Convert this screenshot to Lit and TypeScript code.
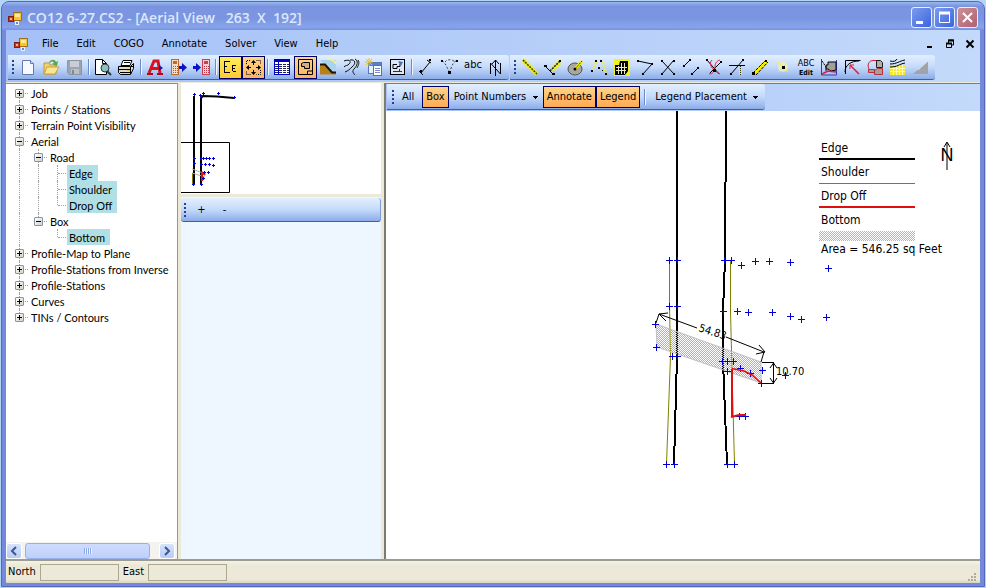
import { LitElement, html, svg, css, nothing } from "lit";
import { customElement, state } from "lit/decorators.js";
import { classMap } from "lit/directives/class-map.js";

const appLogo = () => html`<svg class="logo" viewBox="0 0 14 14" width="14" height="14" aria-hidden="true">
  <rect x="5.5" y="1.5" width="8" height="8" fill="#f6c62c" stroke="#a0701c" />
  <path d="M7 3h5v3h-5z" fill="#fdeb9a" />
  <rect x="0.5" y="5.500" width="5" height="5" fill="#c8381c" stroke="#7c2010" />
  <rect x="2" y="7" width="2" height="2" fill="#f8b090" />
  <rect x="7.500" y="10.500" width="3" height="3" fill="#5a8ae8" stroke="#e8f0ff" />
</svg>`;

const blueArrow = (x: number) =>
  svg`<path d="M${x} 10h3v-3l5 4.500l-5 4.500v-3h-3z" fill="#1010c8" />`;

const icons: Record<string, unknown> = {
  new: svg`<path d="M5.500 4.500h8l3 3v11h-11z" fill="#f6f9ff" stroke="#6478b4" /><path d="M13.500 4.500v3h3" fill="#c8d8f4" stroke="#6478b4" />`,
  open: svg`<path d="M4 7h5l1 2h6v9h-12z" fill="#f0d070" stroke="#c09838" /><path d="M4 18l3-7h12l-4 7z" fill="#fbe690" stroke="#c8a040" /><path d="M9 7c1-4 6-4 7-1l2-1l-1 5l-5-2l2-1c-1-2-3-2-4 0z" fill="#58a848" />`,
  save: svg`<path d="M4.500 4.500h14v14h-12l-2-2z" fill="#9ca4b0" stroke="#8c94a0" /><rect x="7" y="5" width="9" height="6" fill="#c8ced8" /><rect x="8" y="13" width="8" height="5" fill="#b8c0cc" /><rect x="9" y="14" width="2" height="4" fill="#808894" />`,
  preview: svg`<path d="M3.500 3.500h7l4 4v11h-11z" fill="#fff" stroke="#000" /><path d="M10.500 3.500v4h4" fill="none" stroke="#000" /><circle cx="13" cy="12" r="4" fill="#8cc0c0" stroke="#303838" /><path d="M15 15l4 4" stroke="#303838" stroke-width="2" />`,
  print: svg`<path d="M8 4.500h9l-2 5h-9z" fill="#fff" stroke="#000" /><path d="M9 6.500h6" stroke="#000" /><path d="M3.500 10.500h12l3-3v5l-3 6h-10l-2-2z" fill="#dcdccc" stroke="#000" /><path d="M4 13.500h12M15.500 11v7M16 10.500h2M5 16.500h10" stroke="#000" /><rect x="12" y="14" width="3" height="1" fill="#e8d820" />`,
  style: svg`<path d="M5 17l5-12h4l2 12M8 12.500h7" fill="none" stroke="#d81020" stroke-width="3" /><path d="M3 18h6M13 18h6" stroke="#b00818" stroke-width="2" /><path d="M15 9l4 3l-4 3z" fill="#1818b0" />`,
  calcOut: svg`<rect x="4.500" y="3.500" width="7" height="15" fill="#f4dcc8" stroke="#c86820" /><rect x="6" y="5" width="4" height="3" fill="#c86820" /><path d="M6.500 10v7M8.500 10v7M10.500 10v7" stroke="#b05818" stroke-dasharray="1 1" />${blueArrow(12)}`,
  calcIn: svg`<rect x="12.500" y="3.500" width="7" height="15" fill="#f8d0d4" stroke="#c84050" /><rect x="14" y="5" width="4" height="3" fill="#c84050" /><path d="M14.500 10v7M16.500 10v7M18.500 10v7" stroke="#b83848" stroke-dasharray="1 1" />${blueArrow(3)}`,
  tree: svg`<path d="M5.500 5v12M6 5.500h5M6 10.500h2M6 16.500h5M13.500 9v6M14 9.500h3M14 12.500h2M14 15.500h3" fill="none" stroke="#000" />`,
  extents: svg`<path d="M4.500 8v-3.500h4M14.500 4.500h4v4M18.500 14v4.500h-4M8.500 18.500h-4v-4" fill="none" stroke="#000" stroke-dasharray="1 1" /><path d="M11.500 4l2.500 3h-5zM11.500 19l2.500-3h-5zM4 11.500l3-2.500v5zM19 11.500l-3-2.500v5z" fill="#000" /><path d="M11.500 6v3M11.500 14v3M6 11.500h3M14 11.500h3" stroke="#000" />`,
  table: svg`<rect x="3" y="3" width="16" height="16" fill="#fff" /><path d="M3 4.500h16" stroke="#0000c0" stroke-width="3" /><path d="M3.500 3v16M7.500 3v16M18.500 3v16" stroke="#0000c0" /><path d="M4 8.500h14M4 10.500h14M4 12.500h14M4 14.500h14M4 16.500h14" stroke="#202060" stroke-dasharray="3 1" /><path d="M3 18.500h16" stroke="#0000c0" />`,
  sheet: svg`<path d="M4.500 3.500h14v15h-14z" fill="none" stroke="#000" /><path d="M13.500 18v-3h5" fill="none" stroke="#000" /><path d="M9.500 6.500h6v6h-5v-2h-3v-3z" fill="#d8b080" stroke="#000" />`,
  hill: svg`<path d="M3 4h16v10h-7z" fill="#a8d4f0" /><path d="M10 3c4 0 8 2 9 5" fill="none" stroke="#f4f090" stroke-width="2" /><path d="M3 8.500h5l6 7l5 1v2h-16z" fill="#b88018" /><path d="M3 8.500h5l7 8h4" fill="none" stroke="#201400" stroke-width="2" />`,
  contour: svg`<path d="M4 5c5-2 8 0 5 3c-1 2-4 1-5 3M10 4c6-1 6 4 2 7c-2 2-4 4-7 5M15 3c4 2 2 7-1 10c-2 2-1 4 1 6M18 4c2 3 0 6-1 8" fill="none" stroke="#101010" />`,
  form: svg`<rect x="5.500" y="6.500" width="13" height="11" fill="#e8f0fc" stroke="#5878b8" /><rect x="6" y="7" width="12" height="3" fill="#5880d0" /><rect x="10.500" y="9.500" width="8" height="10" fill="#fff" stroke="#707070" /><path d="M12 12.500h5M12 14.500h5M12 16.500h5" stroke="#7890c0" /><path d="M6 2v8M2 6h8M3 3l6 6M9 3l-6 6" stroke="#e8c030" />`,
  redo: svg`<rect x="4.500" y="3.500" width="14" height="15" fill="#dce8f8" stroke="#000" /><path d="M11 8.500h-4v4h4v-2h3v-3" fill="none" stroke="#000" /><path d="M12 5l5 1l-2 4z" fill="#4878b0" /><path d="M7 15.500h9M13.500 13v3" stroke="#303030" />`,
  segment: svg`<path d="M6 17l9-11M4 15l4 4M12 4l4 3" stroke="#000" fill="none" /><path d="M5 14h2v2h-2zM14 3h2v2h-2z" />`,
  arc: svg`<path d="M4 5c3 1 4 5 7 10M18 5c-3 1-4 5-6 10M7 6c2-3 7-3 10 0" fill="none" stroke="#404040" stroke-dasharray="2 2" /><path d="M3 4h2v2h-2zM18 4h2v2h-2zM10 15h3v3h-3z" />`,
  abc: svg`<text x="12" y="12" text-anchor="middle" class="glyph wide">abc</text>`,
  north: svg`<path d="M6.500 18v-11l10 11v-11" fill="none" stroke="#000" /><path d="M11.500 20v-16M8 8l3.500-4l3.500 4" fill="none" stroke="#000" />`,
  yellowLine: svg`<path d="M4 4l14 14" stroke="#f4f000" stroke-width="4" /><path d="M4 4l14 14" stroke="#404000" stroke-width="1.500" stroke-dasharray="2 1" />`,
  perp: svg`<path d="M10 14l8-8" stroke="#f4f000" stroke-width="4" /><path d="M8 15l10-10" stroke="#202020" stroke-width="1.500" stroke-dasharray="2 1" /><path d="M3 10l8 8" stroke="#000" /><path d="M2 9h3v2h-3zM10 17h3v2h-3zM17 4h2v2h-2z" />`,
  circle: svg`<ellipse cx="10" cy="13" rx="7" ry="6" fill="#a8a89c" stroke="#505050" /><path d="M10 13l7-8" stroke="#f4f000" stroke-width="3" /><path d="M10 13l7-8" stroke="#404000" stroke-dasharray="2 1" /><circle cx="10" cy="13" r="1.500" />`,
  spread: svg`<path d="M8 5l-4 11M14 5l4 12" stroke="#f0ec40" stroke-width="2" stroke-dasharray="3 1" /><path d="M7 4h2v2h-2zM12 4h2v2h-2zM3 14h2v2h-2zM10 11h2v2h-2zM17 17h2v2h-2zM14 14h1v1h-1z" />`,
  grid: svg`<rect x="3" y="3" width="16" height="17" fill="#f4f020" /><path d="M9 5h8v10l-3 4h-10v-10h4z" fill="#000" /><path d="M5 11.500h11M5 14.500h10M7.500 10v8M10.500 7v11M13.500 7v11" stroke="#e8e8c0" />`,
  angle: svg`<path d="M4 5l14 3l-9 10" fill="none" stroke="#000" /><path d="M3 4h2v2h-2zM17 7h2v2h-2zM8 17h2v2h-2z" />`,
  cross: svg`<path d="M5 5l12 13M17 4l-12 14" stroke="#000" /><path d="M4 4h2v2h-2zM16 4h2v2h-2zM4 17h2v2h-2zM16 17h2v2h-2z" />`,
  parallel: svg`<path d="M4 10l6-6M12 18l6-6" stroke="#000" /><path d="M3 9h2v2h-2zM9 3h2v2h-2zM11 17h2v2h-2zM17 11h2v2h-2z" />`,
  curveCross: svg`<path d="M4 4l12 14M18 6l-11 11" fill="none" stroke="#000" /><path d="M9 4c-4 4 0 10 8 14M17 4c-4 1-5 4-5 7c0 4-2 7-6 7" fill="none" stroke="#e02040" /><path d="M3 3h2v2h-2zM17 5h2v2h-2zM10 13h3v3h-3z" />`,
  offset: svg`<path d="M3 9.500h16M5 18l12-14" stroke="#000" /><path d="M14.500 10v9" stroke="#f4f000" stroke-width="3" /><path d="M14.500 10v9" stroke="#303000" stroke-dasharray="1 1" /><path d="M4 17h2v2h-2zM16 3h2v2h-2z" />`,
  band: svg`<path d="M6 17l12-12" stroke="#f4f000" stroke-width="4" /><path d="M4 17l13-13M7 19l12-13" stroke="#000" stroke-dasharray="3 1" /><path d="M3 16h3v3h-3zM16 4h2v2h-2z" />`,
  point: svg`<circle cx="11" cy="11" r="5" fill="#f8f4a0" opacity="0.700" /><path d="M6 6l10 10M16 6l-10 10" stroke="#f4ee50" /><rect x="10" y="10" width="3" height="3" />`,
  abcEdit: svg`<text x="11" y="10" text-anchor="middle" class="glyph">ABC</text><text x="11" y="19" text-anchor="middle" class="glyph tiny">Edit</text>`,
  area: svg`<path d="M3.500 3v16h15v-15" fill="none" stroke="#3838b0" /><path d="M10 6h8v8l-5 1l-3-2h-2v-4h2z" fill="#a0a098" stroke="#000" /><path d="M4 5l4 6v5" fill="none" stroke="#000" stroke-dasharray="2 1" /><path d="M4 18l6-3l8 1" fill="none" stroke="#d82038" stroke-width="1.500" />`,
  tangent: svg`<path d="M4.500 18v-13.500h15M4 16c0-7 6-11 14-11" fill="none" stroke="#000" /><path d="M9 9l9 9" stroke="#d82038" stroke-width="1.500" /><path d="M9 9h4M9 9v4" stroke="#d82038" />`,
  boundary: svg`<path d="M13 4.500h-4c-7 0-6 11 0 11" fill="none" stroke="#d82038" /><path d="M12.500 4.500h4l2 2v5h-6z" fill="#b0b0a8" stroke="#202020" /><path d="M4.500 13.500h6v3h-6zM10.500 14.500l3-2h5v6h-8z" fill="#a8a098" stroke="#b03040" />`,
  slope: svg`<rect x="3" y="9" width="15" height="10" fill="#f4e830" /><path d="M6.500 10v9M9.500 9v10M12.500 9v10M15.500 9v10M3 12.500h15M3 15.500h15" stroke="#fff8b0" /><path d="M3 5c4 1 6 0 7-2M3 8c7 0 9-3 15-4M3 11c8 0 9-3 15-4" fill="none" stroke="#000" />`,
  wedge: svg`<path d="M3 18l15-13v13z" fill="#a0a4a8" /><path d="M8 14l10-9" stroke="#e0e4e8" />`,
};

type Tool = { icon: string; label: string; on?: boolean } | null;

const mainTools: Tool[] = [
  { icon: "new", label: "New" },
  { icon: "open", label: "Open" },
  { icon: "save", label: "Save" },
  null,
  { icon: "preview", label: "Print preview" },
  { icon: "print", label: "Print" },
  null,
  { icon: "style", label: "Annotation style" },
  { icon: "calcOut", label: "Send to data collector" },
  { icon: "calcIn", label: "Read from data collector" },
  null,
  { icon: "tree", label: "Tree", on: true },
  { icon: "extents", label: "Zoom extents", on: true },
  null,
  { icon: "table", label: "Point table" },
  { icon: "sheet", label: "Aerial view", on: true },
  { icon: "hill", label: "Terrain" },
  { icon: "contour", label: "Contours" },
  { icon: "form", label: "New view" },
  { icon: "redo", label: "Refresh drawing" },
  null,
  { icon: "segment", label: "Dimension" },
  { icon: "arc", label: "Arc" },
  { icon: "abc", label: "Text" },
  { icon: "north", label: "North arrow" },
];

const solverTools: Tool[] = [
  { icon: "yellowLine", label: "Inverse" },
  { icon: "perp", label: "Perpendicular" },
  { icon: "circle", label: "Circle" },
  { icon: "spread", label: "Radial points" },
  { icon: "grid", label: "Area grid" },
  { icon: "angle", label: "Angle" },
  { icon: "cross", label: "Intersection" },
  { icon: "parallel", label: "Parallel" },
  { icon: "curveCross", label: "Curve intersection" },
  { icon: "offset", label: "Offset" },
  { icon: "band", label: "Band" },
  { icon: "point", label: "Point" },
  { icon: "abcEdit", label: "Edit text" },
  { icon: "area", label: "Area" },
  { icon: "tangent", label: "Tangent" },
  { icon: "boundary", label: "Boundary" },
  { icon: "slope", label: "Slope grid" },
  { icon: "wedge", label: "Grade" },
];

// Guide letters: "f" full line, "t" full line with branch, "h" upper half with branch,
// "b" lower half with branch, "-" blank.
type Row = { label: string; guides: string; sign?: "+" | "-"; marked?: boolean };

const rows: Row[] = [
  { label: "Job", guides: "b", sign: "+" },
  { label: "Points / Stations", guides: "t", sign: "+" },
  { label: "Terrain Point Visibility", guides: "t", sign: "+" },
  { label: "Aerial", guides: "t", sign: "-" },
  { label: "Road", guides: "ft", sign: "-" },
  { label: "Edge", guides: "fft", marked: true },
  { label: "Shoulder", guides: "fft", marked: true },
  { label: "Drop Off", guides: "ffh", marked: true },
  { label: "Box", guides: "fh", sign: "-" },
  { label: "Bottom", guides: "f-h", marked: true },
  { label: "Profile-Map to Plane", guides: "t", sign: "+" },
  { label: "Profile-Stations from Inverse", guides: "t", sign: "+" },
  { label: "Profile-Stations", guides: "t", sign: "+" },
  { label: "Curves", guides: "t", sign: "+" },
  { label: "TINs / Contours", guides: "h", sign: "+" },
];

const surveyPoints: [number, number][] = [
  [283, 149], [291, 149], [283, 195], [291, 195], [286, 245], [291, 245],
  [280, 353], [288, 353], [269, 213], [270, 236],
  [338, 149], [345, 149], [355, 154], [369, 150], [383, 150], [404, 151], [442, 157],
  [337, 200], [351, 200], [362, 201], [386, 201], [404, 205], [415, 208], [440, 206],
  [336, 250], [341, 250], [347, 250], [341, 260], [354, 257], [364, 262],
  [376, 259], [399, 264], [375, 272], [353, 305], [359, 305], [341, 353], [348, 353],
];

const overviewPoints: [number, number][] = [
  [13, 11], [19, 12], [22, 10], [37, 10], [53, 14], [13, 75], [20, 75],
  [22, 75], [25, 75], [28, 75], [32, 75], [20, 81], [24, 81], [28, 81], [32, 82],
  [13, 80], [23, 89], [27, 89], [22, 95], [12, 101], [20, 101],
];

const plus = ([x, y]: [number, number], r: number) => `M${x - r} ${y + 0.5}h${2 * r + 1}M${x + 0.5} ${y - r}v${2 * r + 1}`;

const uiFont = css`"DejaVu Sans Condensed", "DejaVu Sans", sans-serif`;

@customElement("tool-strip")
class ToolStrip extends LitElement {
  static properties = { tools: { attribute: false } };
  declare tools: Tool[];

  static styles = css`
    :host { display: flex; align-items: center; height: 24px; padding: 0 2px 0 4px;
      background: linear-gradient(#e3effe, #c4dafb 50%, #8cade9);
      border-bottom: 1px solid #3b61a4; border-radius: 0 3px 3px 0; }
    .grip { width: 3px; height: 14px; margin-right: 2px;
      background: repeating-linear-gradient(#27418b 0 2px, transparent 2px 4px) 0 0 / 2px 14px no-repeat; }
    .sep { width: 1px; height: 16px; margin: 0 2px; background: #6a8ccb; border-right: 1px solid #f1f6ff; }
    button { display: flex; width: 23px; height: 23px; padding: 0; border: 0; background: none; }
    button.on { background: linear-gradient(#fed78c, #ffb060); box-shadow: inset 0 0 0 1px #00006c; }
    button.tree { background: linear-gradient(#fff060, #ffc830); }
    .glyph { font: 9px ${uiFont}; }
    .wide { font-size: 11px; }
    .tiny { font-size: 7px; font-weight: 700; }
  `;

  render() {
    return html`<span class="grip"></span>${this.tools.map((t) =>
      t
        ? html`<button class=${classMap({ on: !!t.on, tree: t.icon === "tree" })} aria-label=${t.label} title=${t.label}>
            <svg viewBox="0 0 23 23" width="23" height="23">${icons[t.icon]}</svg>
          </button>`
        : html`<span class="sep"></span>`
    )}`;
  }
}

@customElement("nav-tree")
class NavTree extends LitElement {
  static styles = css`
    :host { display: flex; flex-direction: column; background: #fff; min-height: 0;
      font: 11px/16px Lato, "Liberation Sans", sans-serif; color: #000; }
    ul { flex: 1; margin: 0; padding: 1px 0 0 4px; list-style: none; overflow: hidden; }
    li { display: flex; height: 16px; white-space: nowrap; }
    .guide { position: relative; width: 19px; height: 16px; flex: none; }
    .guide::before { content: ""; position: absolute; left: 9px; top: 0; bottom: 0; border-left: 1px dotted #a0a0a0; }
    .guide.b::before { top: 8px; }
    .guide.h::before { bottom: 8px; }
    .guide.none::before { display: none; }
    .t::after, .h::after, .b::after { content: ""; position: absolute; left: 10px; right: 1px; top: 8px; border-top: 1px dotted #a0a0a0; }
    .toggle { position: absolute; z-index: 1; left: 5px; top: 4px; width: 9px; height: 9px; padding: 0;
      border: 1px solid #8496ac; border-radius: 1px; background: linear-gradient(135deg, #fff, #d4d0c4); }
    .toggle::before { content: ""; position: absolute; left: 1px; top: 3px; width: 5px; height: 1px; background: #000; }
    .closed::after { content: ""; position: absolute; left: 3px; top: 1px; width: 1px; height: 5px; background: #000; }
    .name { height: 16px; line-height: 18px; padding: 0 5px 0 2px; }
    .marked { background: #b0e0e6; }
    .scroll { display: flex; align-items: center; gap: 3px; height: 17px; padding: 0 2px 0 0; background: #f4f3ee; }
    .end { width: 16px; height: 16px; padding: 0; border: 1px solid #fff; border-radius: 3px; background: linear-gradient(#d6e2fd, #b8ccf8); display: flex; }
    .track { flex: 1; display: flex; }
    .thumb { flex: 1; margin-right: 6px; height: 14px; border: 1px solid #98b0e8; border-radius: 3px; display: flex; align-items: center; justify-content: center;
      background: linear-gradient(#cfdcfe, #bdd0fb); }
    .ridges { width: 8px; height: 6px; background: repeating-linear-gradient(90deg, #8ca8e8 0 1px, #eaf1ff 1px 2px); }
  `;

  private cell(kind: string) {
    return kind === "-" ? "none" : kind;
  }

  render() {
    return html`
      <ul>
        ${rows.map(
          (r) => html`<li>
            ${[...r.guides].map(
              (g, i) => html`<span class="guide ${this.cell(g)}">${r.sign && i === r.guides.length - 1
                ? html`<button class=${classMap({ toggle: true, closed: r.sign === "+" })} aria-label="Toggle ${r.label}"></button>`
                : nothing}</span>`
            )}
            <span class=${classMap({ name: true, marked: !!r.marked })}>${r.label}</span>
          </li>`
        )}
      </ul>
      <div class="scroll">
        <button class="end" aria-label="Scroll left"><svg viewBox="0 0 14 14" width="14" height="14"><path d="M9 3l-4 4l4 4" fill="none" stroke="#3c5890" stroke-width="2" /></svg></button>
        <div class="track"><div class="thumb"><span class="ridges"></span></div></div>
        <button class="end" aria-label="Scroll right"><svg viewBox="0 0 14 14" width="14" height="14"><path d="M5 3l4 4l-4 4" fill="none" stroke="#3c5890" stroke-width="2" /></svg></button>
      </div>
    `;
  }
}

@customElement("aerial-view")
class AerialView extends LitElement {
  @state() private shown: Record<string, boolean> = { Box: true, Annotate: true, Legend: true };

  static styles = css`
    :host { display: flex; flex-direction: column; background: #fff; min-width: 0; font: 11px/16px ${uiFont}; }
    .bar { display: flex; background: linear-gradient(90deg, #a6c1f5, #c4dafb); height: 27px; padding-left: 1px; }
    .strip { display: flex; align-items: center; height: 26px; padding: 1px 2px 0 5px; box-sizing: border-box;
      background: linear-gradient(#e3effe, #c4dafb 50%, #8cade9); border-bottom: 1px solid #3b61a4; border-radius: 0 3px 3px 0; }
    .grip { width: 3px; height: 14px; margin-right: 3px; background: repeating-linear-gradient(#27418b 0 2px, transparent 2px 4px) 0 0 / 2px 14px no-repeat; }
    button { height: 22px; padding: 0 4px; border: 0; background: none; font: inherit; color: #000; }
    .all { padding: 0 8px 0 4px; }
    button.on { background: linear-gradient(#fed78c, #ffa850); box-shadow: inset 0 0 0 1px #00006c; }
    select { height: 22px; padding: 0 16px 0 5px; border: 0; font: inherit; color: #000; appearance: none;
      background: linear-gradient(#000, #000) no-repeat right 5px top 10px / 5px 1px, linear-gradient(#000, #000) no-repeat right 6px top 11px / 3px 1px, linear-gradient(#000, #000) no-repeat right 7px top 12px / 1px 1px; }
    .sep { width: 1px; height: 16px; margin: 0 4px; background: #6a8ccb; border-right: 1px solid #f1f6ff; }
    .canvas { position: relative; flex: 1; min-height: 0; }
    .plan { position: absolute; inset: 0; width: 100%; height: 100%; }
    .dim { font: 11px ${uiFont}; }
    .compass { position: absolute; right: 26px; top: 28px; }
    .letter { font: 18px "Liberation Sans", Arial, sans-serif; }
    .legend { position: absolute; right: 33px; top: 25px; width: 128px; font: 12px/24px ${uiFont}; white-space: nowrap; }
    .key { width: 96px; height: 24px; padding-left: 2px; box-sizing: border-box; }
    .edge { border-bottom: 2px solid #000; }
    .shoulder { border-bottom: 1px solid #808000; }
    .drop { border-bottom: 2px solid #e01010; }
    .hatch { height: 23px; }
    .swatch { width: 96px; height: 10px; background: repeating-conic-gradient(#b4b4b4 0 25%, #fff 0 50%) 0 0 / 2px 2px; }
    .sum { padding-left: 2px; line-height: 16px; }
  `;

  private toggle(name: string) {
    this.shown = { ...this.shown, [name]: !this.shown[name] };
  }

  private check(name: string) {
    return html`<button class=${classMap({ on: this.shown[name] })} aria-pressed=${this.shown[name]} @click=${() => this.toggle(name)}>${name}</button>`;
  }

  render() {
    return html`
      <div class="bar"><div class="strip">
        <span class="grip"></span>
        <button class="all">All</button>
        ${this.check("Box")}
        <select aria-label="Point Numbers"><option>Point Numbers</option></select>
        ${this.check("Annotate")}${this.check("Legend")}
        <span class="sep"></span>
        <select aria-label="Legend Placement"><option>Legend Placement</option></select>
      </div></div>
      <div class="canvas">
        <svg class="plan" role="img" aria-label="Aerial plan">
          <defs>
            <pattern id="hatch" width="2" height="2" patternUnits="userSpaceOnUse">
              <rect width="1" height="1" fill="#b0b0b0" /><rect x="1" y="1" width="1" height="1" fill="#b0b0b0" />
            </pattern>
          </defs>
          <g fill="none">
            <path d="M283.500 149V195L284.500 245L280.500 353M344.500 149V200L346 261L348.500 353" stroke="#808000" />
            <path d="M291 0V245L288 353M340 0L339 149L337 200V250L341 353" stroke="#000" stroke-width="2" shape-rendering="crispEdges" />
          </g>
          ${this.shown.Box ? svg`<path d="M270 213L375 251V272L271 236z" fill="url(#hatch)" stroke="#c0c0c8" />` : nothing}
          <path d="${surveyPoints.map((p) => plus(p, 3)).join("")}" fill="none" stroke="#0000d8" />
          <path d="M346 306V258" stroke="#e01010" stroke-width="2" />
          <path d="M345 306L353 304H360" fill="none" stroke="#e01010" stroke-width="2" />
          <path d="M346 257.500L358 260L366 264L375 272" fill="none" stroke="#e01010" stroke-width="1.500" />
          ${this.shown.Annotate
            ? svg`<g fill="none" stroke="#000">
                <path d="M270 212L273 203L311 217M340 226L378 241L375 251" />
                <path d="M282 202L273 203L280 210M373 234L379 241L370 243" />
                <path d="M376 251.500H388M376 272.500H388M387.500 252V272M384 257L387.500 252L391 257M384 267L387.500 272L391 267" />
              </g>
              <text class="dim" transform="translate(312 220) rotate(18)">54.83</text>
              <text class="dim" x="390" y="264">10.70</text>`
            : nothing}
        </svg>
        ${this.shown.Legend
          ? html`<div class="legend">
              <div class="key edge">Edge</div>
              <div class="key shoulder">Shoulder</div>
              <div class="key drop">Drop Off</div>
              <div class="key hatch">Bottom</div>
              <div class="swatch"></div>
              <div class="sum">Area = 546.25 sq Feet</div>
            </div>`
          : nothing}
        <svg class="compass" width="14" height="32" viewBox="0 0 14 32" role="img" aria-label="North">
          <text class="letter" x="7" y="22" text-anchor="middle">N</text>
          <path d="M7 31V4M4 8L7 3L10 8" fill="none" stroke="#000" />
        </svg>
      </div>
    `;
  }
}

@customElement("app-root")
class AppRoot extends LitElement {
  static styles = css`
    :host { display: block; box-sizing: border-box; height: 100vh; padding: 1px; background: #b4d4f8; font: 11px/16px ${uiFont}; color: #000; }
    .window { display: flex; flex-direction: column; height: 100%; box-sizing: border-box; padding: 0 4px 3px 4px;
      background: #7589dc; border: 1px solid #5468bc; border-radius: 8px 8px 0 0; }
    .title { display: flex; align-items: center; height: 28px; margin: 0 -4px; padding: 3px 6px 0 6px; box-sizing: border-box; border-radius: 7px 7px 0 0; gap: 5px; flex: none;
      background: linear-gradient(#9cb8f0, #7b94e0 15%, #7b96e1 60%, #86a4ec 90%, #7890dc); color: #dce8fc; }
    .title h1 { flex: 1; margin: 0; font: 600 14px/20px "Open Sans", "Noto Sans", sans-serif; white-space: pre; }
    .caps { display: flex; gap: 2px; }
    .cap { width: 21px; height: 21px; padding: 0; border: 1px solid #e8f0ff; border-radius: 3px; background: linear-gradient(135deg, #7c9cf0, #3c64dc); display: flex; }
    .close { background: linear-gradient(135deg, #cc9098, #b06070); }
    .menu { display: flex; align-items: center; height: 25px; box-sizing: border-box; flex: none; padding: 2px 0 0 8px; background: linear-gradient(90deg, #a4c0f6, #c4dafb); }
    .menu a { color: #000; text-decoration: none; margin-left: 18px; }
    .menu .first { margin-left: 14px; }
    .push { flex: 1; }
    .mini { width: 20px; height: 20px; padding: 0; border: 0; background: none; display: flex; align-items: center; justify-content: center; }
    .tools { display: flex; gap: 1px; padding-left: 2px; height: 27px; flex: none; background: linear-gradient(90deg, #a4c0f6, #c4dafb); border-bottom: 1px solid #ece9d8; }
    .work { flex: 1; display: grid; grid-template-columns: 172px 200px minmax(0, 1fr); column-gap: 3px; min-height: 0; background: #ece9d8; }
    nav-tree { border-right: 1px solid #8c98a8; border-top: 1px solid #8c8c84; }
    .side { display: flex; flex-direction: column; min-width: 0; background: #eef6ff; }
    .overview { height: 111px; background: #fff; border-bottom: 3px solid #ece9d8; }
    .overview svg { display: block; width: 100%; height: 100%; }
    .zoom { display: flex; align-items: center; height: 23px; margin-top: 1px; padding-left: 3px; border-bottom: 1px solid #3b61a4; border-right: 1px solid #7a9ad8; border-radius: 3px;
      background: linear-gradient(#e3effe, #c4dafb 50%, #8cade9); }
    .zoom .grip { width: 3px; height: 14px; margin-right: 3px; background: repeating-linear-gradient(#27418b 0 2px, transparent 2px 4px) 0 0 / 2px 14px no-repeat; }
    .zoom button { width: 23px; height: 22px; padding: 0; border: 0; background: none; font: inherit; }
    aerial-view { border-left: 2px solid #7c7c74; border-top: 1px solid #7c7c74; }
    .status { display: flex; align-items: center; height: 22px; flex: none; padding: 0 3px 0 2px; gap: 4px; background: linear-gradient(#f4f2e8, #ece9d8 20%, #ece9d8 85%, #d8d4c0); border-top: 2px solid #9c9c90; }
    .status input { width: 79px; height: 17px; box-sizing: border-box; border: 1px solid #aca890; background: #ece9d8; padding: 0 3px; font: inherit; }
    .resize { width: 12px; height: 12px; margin-left: auto; align-self: flex-end; }
  `;

  render() {
    return html`<div class="window">
      <header class="title">
        ${appLogo()}
        <h1>CO12 6-27.CS2 - [Aerial View   263  X  192]</h1>
        <div class="caps">
          <button class="cap" aria-label="Minimize"><svg viewBox="0 0 19 19" width="19" height="19"><path d="M4 13h7v3h-7z" fill="#fff" /></svg></button>
          <button class="cap" aria-label="Maximize"><svg viewBox="0 0 19 19" width="19" height="19"><path d="M4.500 5h10v9.500h-10z" fill="none" stroke="#fff" /><path d="M4 5h11" stroke="#fff" stroke-width="3" /></svg></button>
          <button class="cap close" aria-label="Close"><svg viewBox="0 0 19 19" width="19" height="19"><path d="M5 5l9 9M14 5l-9 9" stroke="#fff" stroke-width="2" /></svg></button>
        </div>
      </header>
      <nav class="menu">
        ${appLogo()}
        ${["File", "Edit", "COGO", "Annotate", "Solver", "View", "Help"].map(
          (m, i) => html`<a class=${i ? "item" : "first"} href="#${m.toLowerCase()}">${m}</a>`
        )}
        <span class="push"></span>
        <button class="mini" aria-label="Minimize view"><svg width="10" height="10"><path d="M2 8h5" stroke="#000" stroke-width="2" /></svg></button>
        <button class="mini" aria-label="Restore view"><svg width="10" height="10"><path d="M3.500 4v-3h5v5h-2M1.500 4.500h5v4h-5z" fill="none" stroke="#000" /><path d="M3 1.500h6M1 4.500h6" stroke="#000" stroke-width="2" /></svg></button>
        <button class="mini" aria-label="Close view"><svg width="10" height="10"><path d="M1.500 1.500l7 7M8.500 1.500l-7 7" stroke="#000" stroke-width="2" /></svg></button>
      </nav>
      <div class="tools">
        <tool-strip .tools=${mainTools}></tool-strip>
        <tool-strip .tools=${solverTools}></tool-strip>
      </div>
      <main class="work">
        <nav-tree></nav-tree>
        <section class="side">
          <div class="overview">
            <svg role="img" aria-label="Overview">
              <path d="M-1 59.500H48.500V109.500H-1" fill="none" stroke="#000" />
              <path d="M13 13V102M20 102V15L22 13L36 13.500L53 15" fill="none" stroke="#000" stroke-width="2" />
              <path d="M11 86L25 91M11 90L24 94" stroke="#b0b0b0" />
              <path d="M11.500 90v11" stroke="#808000" />
              <path d="M21 90V98M21 89L24 92" stroke="#e01010" stroke-width="2" />
              <path d="${overviewPoints.map((p) => plus(p, 1)).join("")}" fill="none" stroke="#0000d8" />
            </svg>
          </div>
          <div class="zoom"><span class="grip"></span><button aria-label="Zoom in">+</button><button aria-label="Zoom out">-</button></div>
        </section>
        <aerial-view></aerial-view>
      </main>
      <footer class="status">
        <label for="north">North</label><input id="north" />
        <label for="east">East</label><input id="east" />
        <svg class="resize" viewBox="0 0 12 12"><path d="M9 2h2v2h-2zM6 5h2v2h-2zM9 5h2v2h-2zM3 8h2v2h-2zM6 8h2v2h-2zM9 8h2v2h-2z" fill="#b0ac98" /></svg>
      </footer>
    </div>`;
  }
}
